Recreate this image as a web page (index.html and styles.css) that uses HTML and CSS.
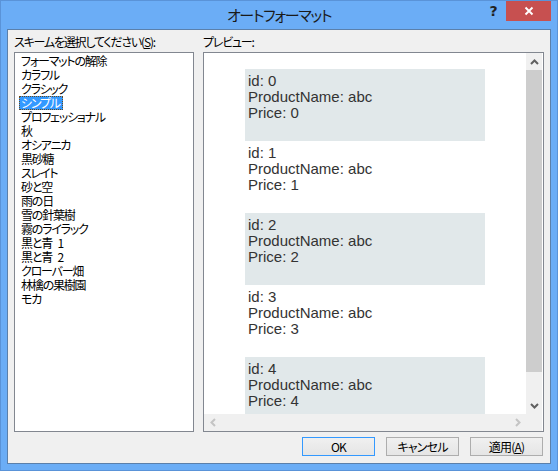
FILE: index.html
```html
<!DOCTYPE html>
<html lang="ja">
<head>
<meta charset="utf-8">
<title>オートフォーマット</title>
<link rel="stylesheet" href="styles.css">
</head>
<body>
<div class="window">
  <div class="titlebar">
    <div class="title">オートフォーマット</div>
    <div class="caption-btns">
      <div class="help">?</div>
      <div class="close">
        <svg width="10" height="10" viewBox="0 0 10 10"><path d="M1.5 1.5 L8.5 8.5 M8.5 1.5 L1.5 8.5" stroke="#fff" stroke-width="1.9" fill="none"/></svg>
      </div>
    </div>
  </div>
  <div class="client">
    <div class="panes">
      <div class="pane pane-left">
        <div class="label">スキームを選択してください(<u>S</u>):</div>
        <div class="listbox">
          <div class="item"><span>フォーマットの解除</span></div>
          <div class="item"><span>カラフル</span></div>
          <div class="item"><span>クラシック</span></div>
          <div class="item selected"><span>シンプル</span></div>
          <div class="item"><span>プロフェッショナル</span></div>
          <div class="item"><span>秋</span></div>
          <div class="item"><span>オシアニカ</span></div>
          <div class="item"><span>黒砂糖</span></div>
          <div class="item"><span>スレイト</span></div>
          <div class="item"><span>砂と空</span></div>
          <div class="item"><span>雨の日</span></div>
          <div class="item"><span>雪の針葉樹</span></div>
          <div class="item"><span>霧のライラック</span></div>
          <div class="item"><span>黒と青 1</span></div>
          <div class="item"><span>黒と青 2</span></div>
          <div class="item"><span>クローバー畑</span></div>
          <div class="item"><span>林檎の果樹園</span></div>
          <div class="item"><span>モカ</span></div>
        </div>
      </div>
      <div class="pane pane-right">
        <div class="label">プレビュー:</div>
        <div class="preview">
          <div class="viewport">
            <div class="records">
              <div class="record alt"><div>id: 0</div><div>ProductName: abc</div><div>Price: 0</div></div>
              <div class="record"><div>id: 1</div><div>ProductName: abc</div><div>Price: 1</div></div>
              <div class="record alt"><div>id: 2</div><div>ProductName: abc</div><div>Price: 2</div></div>
              <div class="record"><div>id: 3</div><div>ProductName: abc</div><div>Price: 3</div></div>
              <div class="record alt"><div>id: 4</div><div>ProductName: abc</div><div>Price: 4</div></div>
            </div>
          </div>
          <div class="vbar">
            <div class="sbtn">
              <svg width="9" height="6" viewBox="0 0 9 6"><path d="M1 5 L4.5 1.5 L8 5" stroke="#606060" stroke-width="2" fill="none"/></svg>
            </div>
            <div class="thumb"></div>
            <div class="track"></div>
            <div class="sbtn">
              <svg width="9" height="6" viewBox="0 0 9 6"><path d="M1 1 L4.5 4.5 L8 1" stroke="#606060" stroke-width="2" fill="none"/></svg>
            </div>
          </div>
          <div class="hbar">
            <div class="sbtn">
              <svg width="6" height="9" viewBox="0 0 6 9"><path d="M5 1 L1.5 4.5 L5 8" stroke="#c4c4c4" stroke-width="2" fill="none"/></svg>
            </div>
            <div class="htrack"></div>
            <div class="sbtn">
              <svg width="6" height="9" viewBox="0 0 6 9"><path d="M1 1 L4.5 4.5 L1 8" stroke="#c4c4c4" stroke-width="2" fill="none"/></svg>
            </div>
          </div>
          <div class="corner"></div>
        </div>
      </div>
    </div>
    <div class="buttons">
      <div class="button default">OK</div>
      <div class="button">キャンセル</div>
      <div class="button">適用(<u>A</u>)</div>
    </div>
  </div>
</div>
</body>
</html>
```
FILE: styles.css
```css
* { box-sizing: border-box; }
html, body { margin: 0; padding: 0; }
body {
  width: 558px;
  height: 471px;
  overflow: hidden;
  font-family: "Noto Sans CJK JP", "Liberation Sans", sans-serif;
  font-size: 12px;
  color: #000;
}
.window {
  width: 558px;
  height: 471px;
  border: 1px solid #5a93d8;
  background: #6badf6;
  padding: 0 6px 6px 6px;
  display: flex;
  flex-direction: column;
}
.titlebar {
  height: 28px;
  margin: 0 -6px;
  display: grid;
}
.title {
  grid-area: 1 / 1;
  text-align: center;
  font-size: 15px;
  line-height: 28px;
  color: #1a1a1a;
  font-feature-settings: "palt";
  letter-spacing: -1.3px;
}
.caption-btns {
  grid-area: 1 / 1;
  justify-self: end;
  align-self: start;
  display: flex;
  margin-right: 6px;
}
.help {
  width: 25px;
  height: 20px;
  text-align: center;
  font-family: "DejaVu Sans", sans-serif;
  font-weight: bold;
  font-size: 14px;
  line-height: 20px;
  color: #222;
}
.close {
  width: 45px;
  height: 20px;
  background: #c75050;
  display: flex;
  align-items: center;
  justify-content: center;
}
.client {
  flex: 1;
  border: 1px solid #5b80ab;
  background: #f0f0f0;
  padding: 5px 6px 7px 6px;
  display: flex;
  flex-direction: column;
}
.panes {
  display: flex;
  gap: 9px;
}
.pane { display: flex; flex-direction: column; }
.pane-left { width: 180px; }
.pane-right { width: 341px; }
.label {
  height: 14px;
  line-height: 14px;
  margin-bottom: 3px;
  white-space: nowrap;
  font-feature-settings: "palt";
  letter-spacing: -1.2px;
}
.listbox {
  height: 380px;
  border: 1px solid #828790;
  background: #fff;
  padding: 1px 0 0 4px;
}
.item {
  height: 14px;
  line-height: 12px;
  white-space: nowrap;
}
.item span {
  display: inline-block;
  height: 14px;
  border: 1px solid transparent;
  padding: 0 2px 0 1px;
  font-feature-settings: "palt";
  letter-spacing: -1.2px;
  word-spacing: 4px;
}
.item.selected span {
  background: #3399ff;
  color: #fff;
  border: 1px dotted #6b4a1c;
}
.preview {
  height: 380px;
  border: 1px solid #828790;
  background: #fff;
  padding-right: 1px;
  display: grid;
  grid-template-columns: 322px 16px;
  grid-template-rows: 361px 17px;
}
.viewport {
  overflow: hidden;
  background: #fff;
}
.records { padding-top: 16px; }
.record {
  width: 240px;
  height: 72px;
  margin: 0 auto;
  padding: 4px 0 0 3px;
  font-family: "Liberation Sans", Arial, sans-serif;
  font-size: 15px;
  line-height: 16px;
  color: #333;
}
.record.alt { background: #e1e8ea; }
.vbar {
  background: #f0f0f0;
  display: flex;
  flex-direction: column;
}
.sbtn {
  flex: 0 0 17px;
  display: flex;
  align-items: center;
  justify-content: center;
}
.thumb { flex: 0 0 302px; background: #cdcdcd; }
.track { flex: 1; }
.hbar {
  background: #f0f0f0;
  display: flex;
}
.htrack { flex: 1; }
.corner { background: #f0f0f0; }
.buttons {
  margin-top: 5px;
  display: flex;
  justify-content: flex-end;
  gap: 11px;
  padding-right: 1px;
}
.button {
  width: 73px;
  height: 19px;
  border: 1px solid #adadad;
  background: linear-gradient(#f0f0f0, #e5e5e5);
  text-align: center;
  line-height: 17px;
  font-size: 12px;
  font-feature-settings: "palt";
  letter-spacing: -0.8px;
}
.button.default { border-color: #3399ff; }
```
